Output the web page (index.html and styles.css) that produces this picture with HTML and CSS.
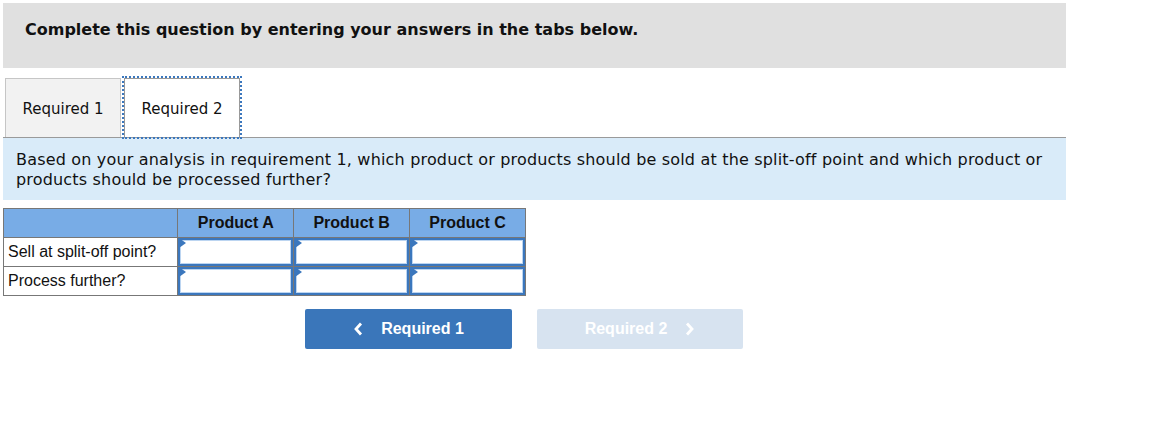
FILE: index.html
```html
<!DOCTYPE html>
<html>
<head>
<meta charset="utf-8">
<link rel="stylesheet" href="styles.css">
</head>
<body>
<div class="wrap">
  <div class="header">Complete this question by entering your answers in the tabs below.</div>
  <div class="tabs">
    <div class="tab">Required 1</div>
    <div class="tab active">Required 2</div>
  </div>
  <div class="question">Based on your analysis in requirement 1, which product or products should be sold at the split-off point and which product or products should be processed further?</div>
  <table class="grid">
    <thead>
      <tr>
        <th class="label-col"></th>
        <th>Product A</th>
        <th>Product B</th>
        <th>Product C</th>
      </tr>
    </thead>
    <tbody>
      <tr>
        <td class="label">Sell at split-off point?</td>
        <td class="cell"><div class="input"><span class="tri"></span></div></td>
        <td class="cell"><div class="input"><span class="tri"></span></div></td>
        <td class="cell"><div class="input"><span class="tri"></span></div></td>
      </tr>
      <tr>
        <td class="label">Process further?</td>
        <td class="cell"><div class="input"><span class="tri"></span></div></td>
        <td class="cell"><div class="input"><span class="tri"></span></div></td>
        <td class="cell"><div class="input"><span class="tri"></span></div></td>
      </tr>
    </tbody>
  </table>
  <div class="nav">
    <div class="btn prev"><svg width="10" height="16" viewBox="0 0 10 16"><path d="M8 2.5 L3 8 L8 13.5" fill="none" stroke="#fff" stroke-width="2.8"/></svg><span>Required 1</span></div>
    <div class="btn next"><span>Required 2</span><svg width="10" height="16" viewBox="0 0 10 16"><path d="M2 2.5 L7 8 L2 13.5" fill="none" stroke="#fff" stroke-width="2.8"/></svg></div>
  </div>
</div>
</body>
</html>
```
FILE: styles.css
```css
html, body {
  margin: 0;
  padding: 0;
  background: #fff;
}
.wrap {
  width: 1063px;
  padding: 3px;
  font-family: "DejaVu Sans", Verdana, sans-serif;
  color: #000;
}
.header {
  background: #e0e0e0;
  height: 65px;
  box-sizing: border-box;
  padding: 17px 0 0 22px;
  font-weight: bold;
  font-size: 16px;
  line-height: 20px;
  color: #111;
}
.tabs {
  display: flex;
  margin-top: 10px;
  padding-left: 2px;
  border-bottom: 1px solid #9a9a9a;
  height: 59px;
}
.tab {
  width: 116px;
  box-sizing: border-box;
  border: 1px solid #c6c6c6;
  border-bottom: none;
  background: #f2f2f2;
  font-size: 15px;
  display: flex;
  align-items: center;
  justify-content: center;
  color: #111;
  padding-top: 2px;
}
.tab.active {
  background: #fff;
  border: 1px solid #999;
  border-bottom: none;
  outline: 2px dotted #3b77bd;
  outline-offset: 0px;
  margin-left: 3px;
  width: 116px;
}
.question {
  background: #d9ebf9;
  padding: 12px 13px 13px;
  font-size: 16px;
  letter-spacing: 0.18px;
  line-height: 20px;
  color: #111;
  height: 62px;
  box-sizing: border-box;
}
.grid {
  margin-top: 8px;
  border-collapse: collapse;
  font-family: "Liberation Sans", Arial, sans-serif;
  font-size: 16px;
  table-layout: fixed;
  width: 523px;
}
.grid th, .grid td {
  border: 1px solid #777;
  padding: 0;
}
.grid th {
  box-sizing: border-box;
  background: #78ace6;
  height: 29px;
  width: 115px;
  font-weight: bold;
  color: #111;
  text-align: center;
  vertical-align: middle;
  line-height: 24px;
}
.grid th.label-col {
  width: 173px;
}
.grid td {
  height: 28px;
}
.grid td.label {
  padding-left: 4px;
  color: #111;
}
.grid td.cell {
  padding: 0;
  vertical-align: top;
}
.input {
  position: relative;
  height: 28px;
  box-sizing: border-box;
  box-shadow: inset 0 0 0 2px #3b77bd, inset 0 0 0 3px #bcd5f1;
}
.tri {
  position: absolute;
  left: 1px;
  top: 0;
  width: 0;
  height: 0;
  border-top: 5px solid transparent;
  border-bottom: 5px solid transparent;
  border-left: 7px solid #3b77bd;
}
.nav {
  display: flex;
  gap: 25px;
  margin-top: 13px;
  padding-left: 302px;
}
.btn {
  width: 207px;
  height: 40px;
  border-radius: 2px;
  display: flex;
  align-items: center;
  justify-content: center;
  gap: 18px;
  font-family: "Liberation Sans", Arial, sans-serif;
  font-weight: bold;
  font-size: 16px;
  color: #fff;
}
.btn.prev {
  background: #3a76ba;
}
.btn.next {
  background: #d7e3f0;
  width: 206px;
}
.btn svg {
  display: block;
}
```
